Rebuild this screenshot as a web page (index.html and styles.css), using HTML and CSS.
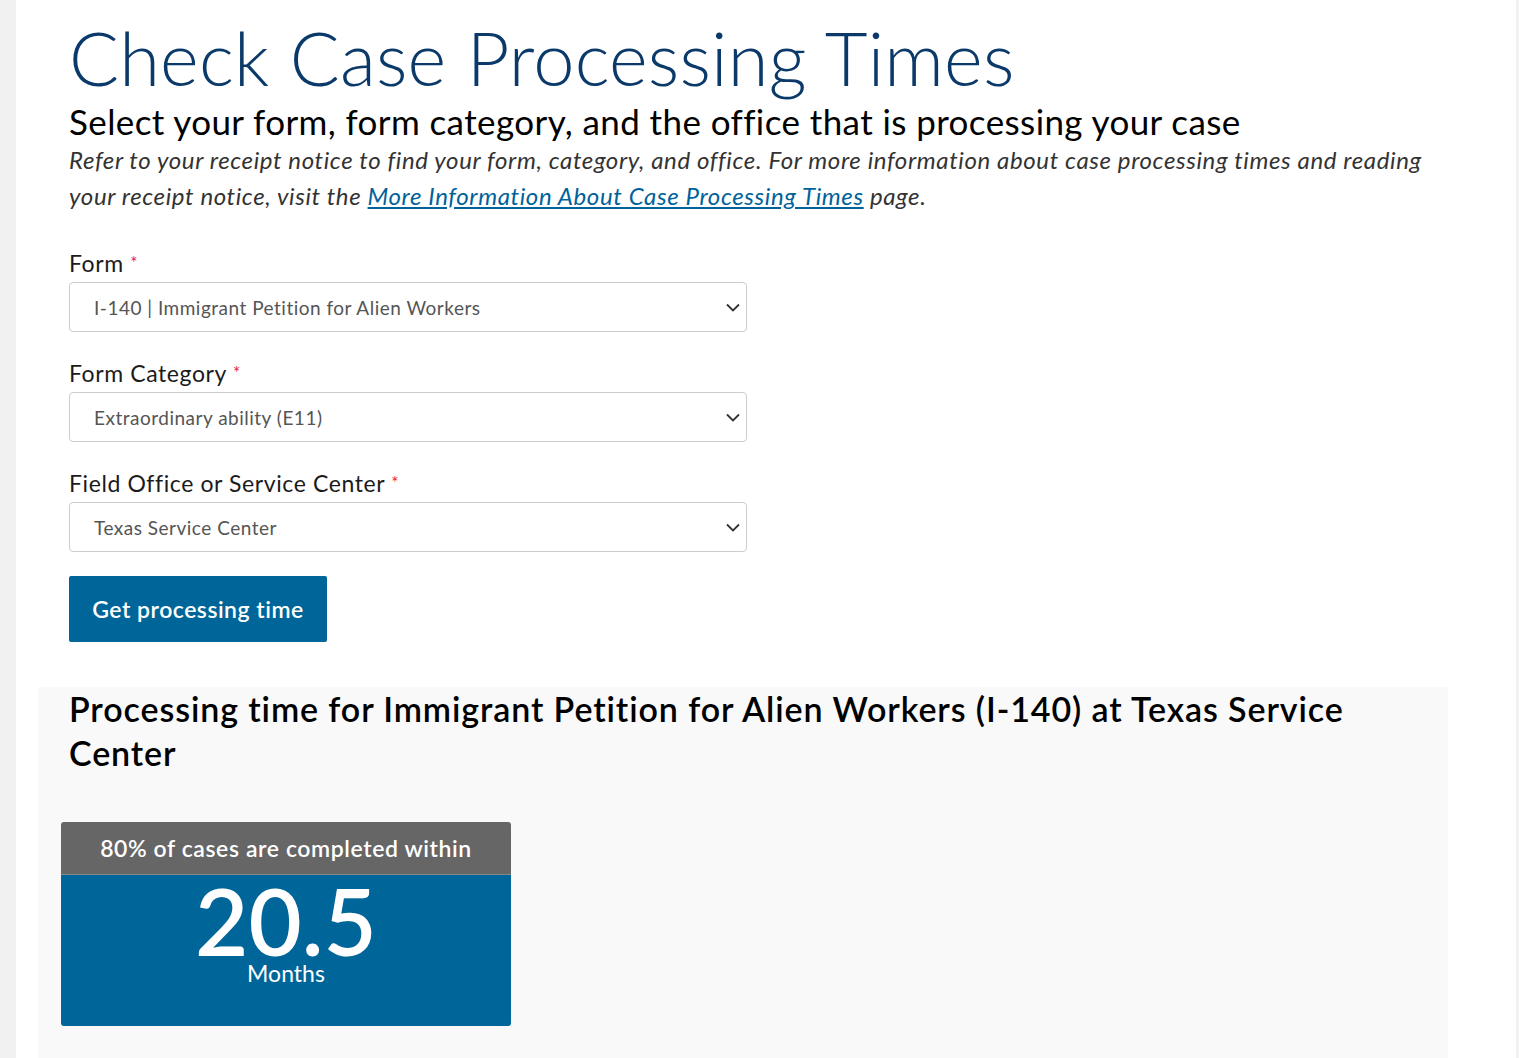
FILE: index.html
```html
<!DOCTYPE html>
<html lang="en">
<head>
    <meta charset="UTF-8">
    <meta name="viewport" content="width=device-width, initial-scale=1.0">
    <title>Check Case Processing Times</title>
    <link rel="stylesheet" href="styles.css">
</head>
<body>
    <div class="page">
        <div class="intro">
            <h1>Check Case Processing Times</h1>
            <h2>Select your form, form category, and the office that is processing your case</h2>
            <p class="note">Refer to your receipt notice to find your form, category, and office. For more information about case processing times and reading your receipt notice, visit the <a href="#">More Information About Case Processing Times</a> page.</p>

            <form class="case-form">
                <div class="field">
                    <label for="form">Form <span class="req">*</span></label>
                    <select id="form">
                        <option>I-140 | Immigrant Petition for Alien Workers</option>
                    </select>
                </div>
                <div class="field">
                    <label for="category">Form Category <span class="req">*</span></label>
                    <select id="category">
                        <option>Extraordinary ability (E11)</option>
                    </select>
                </div>
                <div class="field">
                    <label for="office">Field Office or Service Center <span class="req">*</span></label>
                    <select id="office">
                        <option>Texas Service Center</option>
                    </select>
                </div>
                <button type="button" class="btn">Get processing time</button>
            </form>
        </div>

        <div class="results">
            <h3>Processing time for Immigrant Petition for Alien Workers (I-140) at Texas Service Center</h3>
            <div class="time-card">
                <div class="time-head">80% of cases are completed within</div>
                <div class="time-body">
                    <div class="time-value">20.5</div>
                    <div class="time-unit">Months</div>
                </div>
            </div>
        </div>
    </div>
</body>
</html>
```

FILE: styles.css
```css
body {
    margin: 0;
    padding: 0;
    background-color: #f1f1f1;
    font-family: Lato, "Open Sans", sans-serif;
    color: #000;
}

.page {
    margin-left: 16px;
    width: 1500px;
    min-height: 100vh;
    background-color: #fff;
    overflow: hidden;
}

.intro {
    padding: 16px 0 0 53px;
}

h1 {
    margin: 0;
    font-size: 74px;
    font-weight: 300;
    line-height: 84px;
    color: #0b3a6a;
    letter-spacing: 0.2px;
}

h2 {
    margin: 0;
    font-size: 35px;
    font-weight: 400;
    line-height: 42px;
    letter-spacing: 0.4px;
}

.note {
    margin: 0;
    width: 1390px;
    font-size: 24px;
    font-style: italic;
    line-height: 36px;
    color: #333;
    letter-spacing: 0.62px;
}

.note a {
    color: #00629b;
}

/* form fields */
.case-form {
    margin-top: 36px;
}

.field + .field {
    margin-top: 28px;
}

.field label {
    display: block;
    font-size: 23px;
    line-height: 26px;
    margin-bottom: 6px;
    color: #1b1b1b;
    letter-spacing: 0.6px;
}

.req {
    color: #e31c3d;
    font-size: 17px;
    vertical-align: top;
}

.field select {
    display: block;
    width: 678px;
    height: 50px;
    padding: 0 40px 0 24px;
    border: 1px solid #ccc;
    border-radius: 4px;
    background-color: #fff;
    background-image: url("data:image/svg+xml,%3Csvg xmlns='http://www.w3.org/2000/svg' width='14' height='9' viewBox='0 0 14 9'%3E%3Cpath d='M1 1.5l6 6 6-6' fill='none' stroke='%23333' stroke-width='1.8'/%3E%3C/svg%3E");
    background-repeat: no-repeat;
    background-position: right 6px center;
    -webkit-appearance: none;
    appearance: none;
    font-family: inherit;
    font-size: 19px;
    color: #555;
    letter-spacing: 0.5px;
}

.btn {
    margin-top: 24px;
    width: 258px;
    height: 66px;
    border: none;
    border-radius: 2px;
    background-color: #006699;
    color: #fff;
    font-family: inherit;
    font-size: 23px;
    font-weight: 600;
    letter-spacing: 0.5px;
    cursor: pointer;
}

/* results */
.results {
    margin: 45px 0 0 22px;
    width: 1410px;
    min-height: 380px;
    padding: 0 0 0 31px;
    box-sizing: border-box;
    background-color: #f9f9f9;
}

.results h3 {
    margin: 0;
    width: 1310px;
    font-size: 34px;
    font-weight: 600;
    line-height: 44px;
    letter-spacing: 0.9px;
}

.time-card {
    margin: 47px 0 0 -8px;
    width: 450px;
    border-radius: 3px;
    overflow: hidden;
    color: #fff;
    text-align: center;
}

.time-head {
    height: 52px;
    line-height: 52px;
    background-color: #666;
    border-bottom: 1px solid #888;
    font-size: 23px;
    font-weight: 600;
    letter-spacing: 0.6px;
}

.time-body {
    height: 151px;
    background-color: #006699;
}

.time-value {
    padding-top: 6px;
    font-size: 92px;
    font-weight: 600;
    line-height: 80px;
}

.time-unit {
    font-size: 23px;
    line-height: 24px;
}
```
